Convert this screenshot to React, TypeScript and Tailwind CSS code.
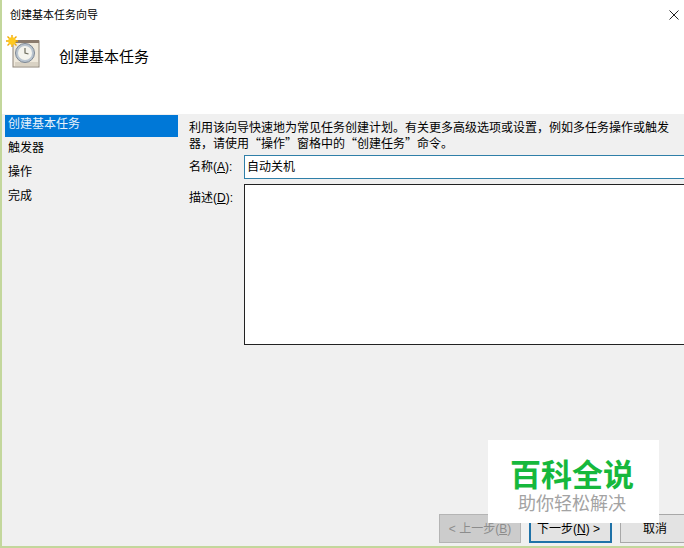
const cjk = "font-['Liberation_Sans','Noto_Sans_CJK_SC',sans-serif]";

const steps = ["创建基本任务", "触发器", "操作", "完成"];

function TaskIcon() {
  return (
    <svg width="36" height="36" viewBox="0 0 36 36" className="shrink-0">
      <rect x="8" y="7" width="26" height="26" fill="#efe9dc" stroke="#8d8479" />
      <rect x="8" y="6" width="26" height="3" fill="#8a7b6e" />
      <rect x="10" y="28" width="23" height="4" fill="#d9d2c4" />
      <circle cx="20" cy="19" r="9.5" fill="#b9c4cf" stroke="#7d8794" />
      <circle cx="20" cy="19" r="7" fill="#f4f4ee" />
      <path d="M20 14V19L23.5 20" fill="none" stroke="#6b6b5c" strokeWidth="1.2" />
      <g stroke="#f2a900" strokeWidth="1.4">
        <path d="M7 1V13M1 7H13M2.5 2.5L11.5 11.5M11.5 2.5L2.5 11.5" />
      </g>
      <circle cx="7" cy="7" r="3.8" fill="#ffc91f" />
    </svg>
  );
}

export default function App() {
  return (
    <div className={`relative flex h-[548px] w-[684px] flex-col overflow-hidden border-b-2 border-l-2 border-b-[#c3d79c] border-l-[#c3d79c] bg-[#f0f0f0] text-black ${cjk}`}>
      <div className="h-[114px] shrink-0 bg-white">
        <div className="flex h-[30px] items-center justify-between pl-2 pr-0.5">
          <span className="text-[11px]">创建基本任务向导</span>
          <svg width="12" height="12" viewBox="0 0 12 12" className="mr-0.5">
            <path d="M1.5 1.5L10.5 10.5M10.5 1.5L1.5 10.5" stroke="#222" strokeWidth="1" />
          </svg>
        </div>
        <div className="mt-[4px] flex items-start pl-[3px]">
          <TaskIcon />
          <span className="ml-[18px] mt-[13px] text-[15px] leading-5">创建基本任务</span>
        </div>
      </div>

      <div className="flex flex-1 pt-px">
        <div className="w-[176px] shrink-0 pl-[3px]">
          {steps.map((step, i) => (
            <div
              key={step}
              className={`mb-[2px] flex h-[22px] w-[173px] items-center pb-[5px] pl-[3px] text-xs ${i === 0 ? "bg-[#0078d7] text-[#e8f2fb]" : ""}`}
            >
              {step}
            </div>
          ))}
        </div>

        <div className="min-w-0 flex-1 pl-[11px]">
          <p className="mt-[4px] w-[490px] font-['Noto_Sans_CJK_SC',sans-serif] text-xs leading-4">
            利用该向导快速地为常见任务创建计划。有关更多高级选项或设置，例如多任务操作或触发器，请使用“操作”窗格中的“创建任务”命令。
          </p>
          <div className="mt-[4px] flex items-center">
            <span className="w-[55px] shrink-0 text-xs">
              名称(<span className="underline">A</span>):
            </span>
            <div className="flex h-[24px] w-[460px] shrink-0 items-center border border-[#2f7fa8] bg-white pl-[2px] text-xs">
              自动关机
            </div>
          </div>
          <div className="mt-[5px] flex items-start">
            <span className="mt-[6px] w-[55px] shrink-0 text-xs">
              描述(<span className="underline">D</span>):
            </span>
            <div className="h-[161px] w-[460px] shrink-0 border border-[#222] bg-white" />
          </div>
        </div>
      </div>

      <div className="flex h-[32px] shrink-0 items-start gap-2 pl-[437px]">
        <div className="flex h-[29px] w-[82px] shrink-0 items-center justify-center border border-[#b4b4b4] bg-[#cccccc] text-xs text-[#8c8c8c]">
          &lt; 上一步(<span className="underline">B</span>)
        </div>
        <div className="flex h-[29px] w-[83px] shrink-0 items-center justify-center border-2 border-[#1f72a8] bg-[#e3e3e3] pr-1 text-xs">
          下一步(<span className="underline">N</span>) &gt;
        </div>
        <div className="flex h-[29px] w-[70px] shrink-0 items-center justify-center border border-[#a8a8a8] bg-[#e3e3e3] text-xs">
          取消
        </div>
      </div>

      <div className="absolute left-[486px] top-[440px] flex h-[83px] w-[171px] flex-col items-center bg-white pr-[3px] pt-[17px]">
        <span className="text-[31px] leading-[37px] font-bold text-[#16b83c]">百科全说</span>
        <span className="text-[18px] leading-5 text-[#a3a3a3]">助你轻松解决</span>
      </div>
    </div>
  );
}
